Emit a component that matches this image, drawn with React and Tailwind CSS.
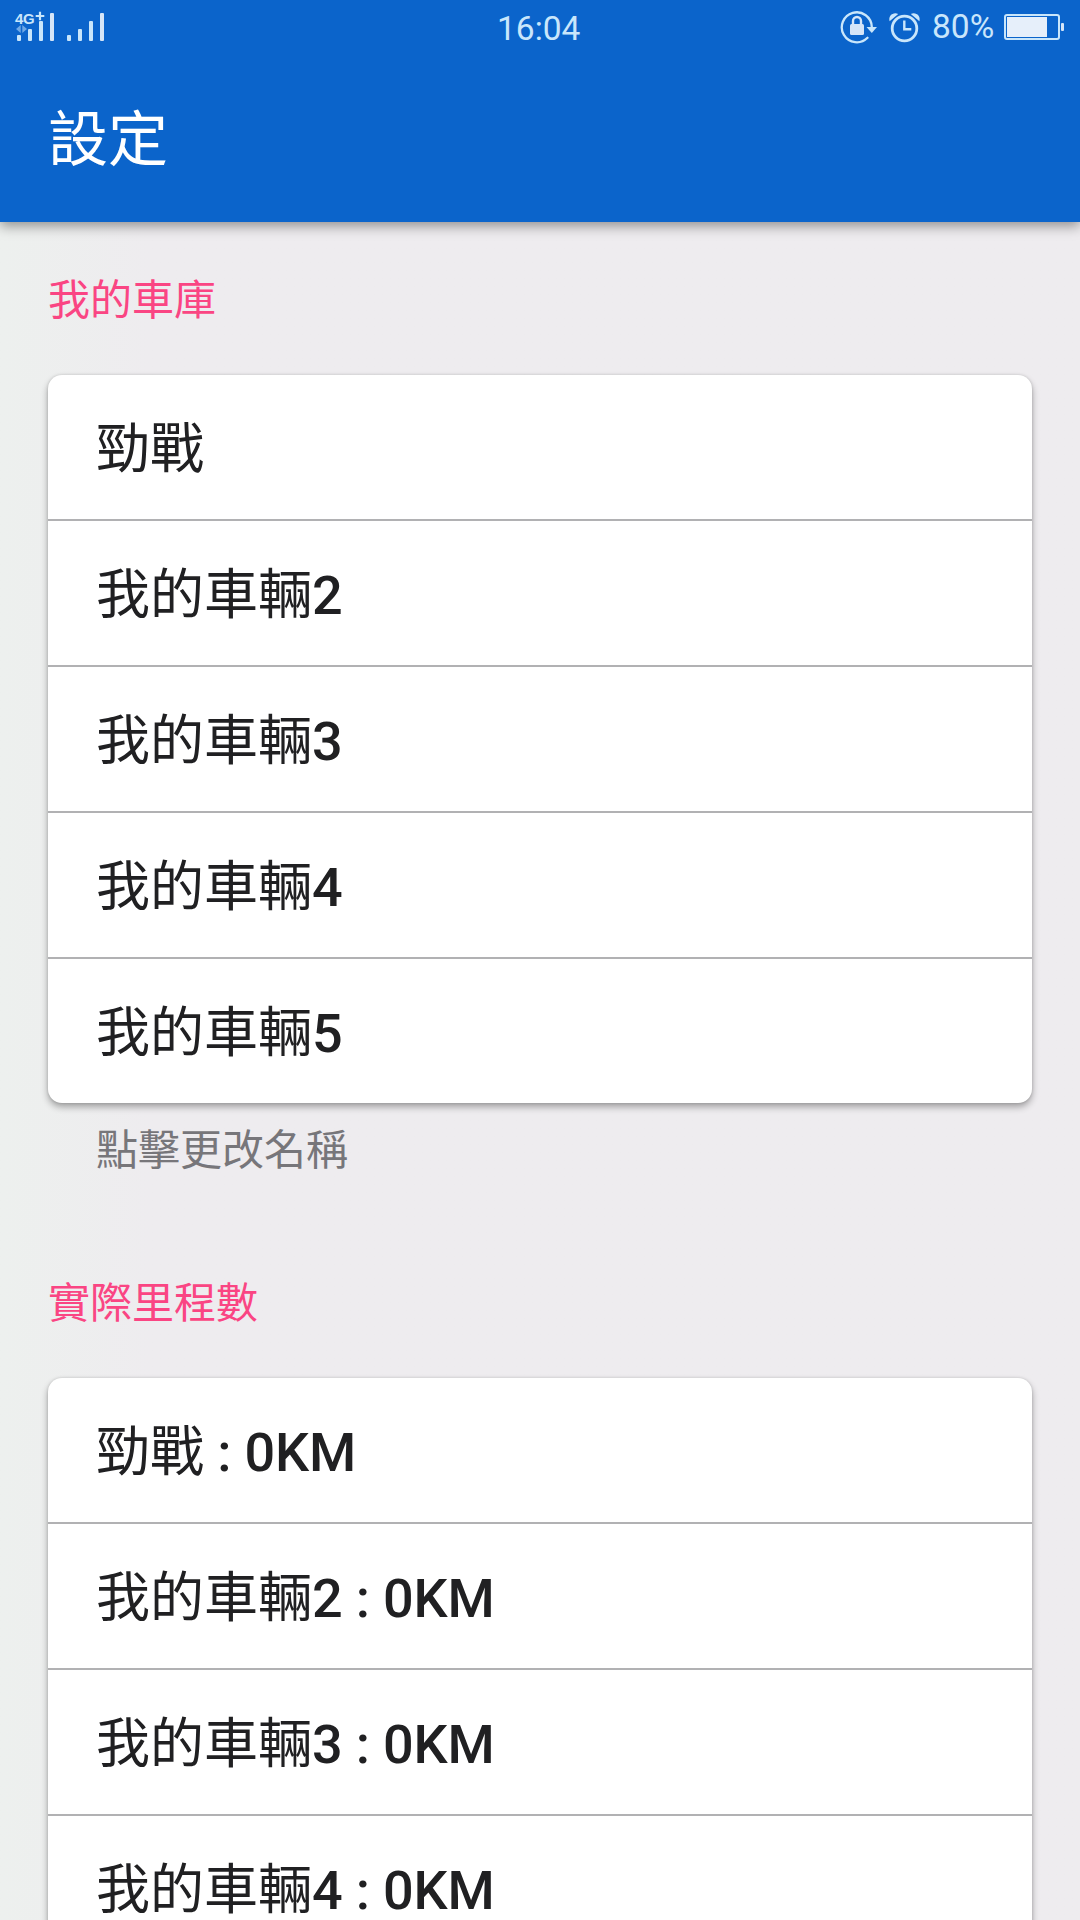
const vozila = ['勁戰', '我的車輛2', '我的車輛3', '我的車輛4', '我的車輛5'];
const kilometraza = vozila.slice(0, 4).map((v) => `${v} : 0KM`);

function Signal() {
  return (
    <div className="flex items-end gap-[7px]">
      <span className="w-1 h-[6px] rounded-[1px] bg-[#c9e6fb]" />
      <span className="w-1 h-3 rounded-[1px] bg-[#c9e6fb]" />
      <span className="w-1 h-5 rounded-[1px] bg-[#c9e6fb]" />
      <span className="w-1 h-7 rounded-[1px] bg-[#d5e5f8]" />
    </div>
  );
}

function StatusBar() {
  return (
    <div className="relative h-[60px] flex items-center justify-between pl-[17px] pr-4 text-[#c9e6fb]">
      <div className="relative flex gap-[13px] -mt-[6px]">
        <Signal />
        <Signal />
        <span className="absolute left-[-2px] -top-px font-['Liberation_Sans'] font-bold text-[15px] leading-[14px] tracking-[-0.3px]">
          4G
        </span>
        <svg className="absolute left-[18px] -top-[2px]" width="10" height="10" viewBox="0 0 10 10">
          <path d="M.7 5h8.6M5 .7v8.6" stroke="currentColor" strokeWidth="2.2" />
        </svg>
        <svg className="absolute left-[-1px] top-[12px]" width="11" height="8" viewBox="0 0 11 8">
          <path d="M0 4 4.7 0v8zM11 4 6.3 0v8z" fill="#6fa9e6" />
        </svg>
      </div>

      <span className="absolute left-[497px] top-[9px] text-[33.5px] leading-[40px]">16:04</span>

      <div className="flex items-center -mt-[6px]">
        {/* rotation lock */}
        <svg width="38" height="36" viewBox="840 9 38 36" fill="none">
          <path
            d="M867.5 37.8A15 15 0 1 1 871.8 27"
            stroke="currentColor"
            strokeWidth="2.3"
            strokeLinecap="round"
          />
          <path d="M866.5 27h10.5l-5.2 6z" fill="currentColor" />
          <rect x="850" y="24" width="14" height="11" rx="1.5" fill="#d5e5f8" />
          <path d="M853 25v-4a4 4 0 0 1 8 0v4" stroke="#d5e5f8" strokeWidth="2.4" />
        </svg>
        {/* alarm */}
        <svg className="ml-[10px]" width="34" height="36" viewBox="888 9 34 36" fill="none">
          <circle cx="904.5" cy="28.5" r="12.3" stroke="currentColor" strokeWidth="2.8" />
          <path d="M904.3 20.5v8.8h7" stroke="currentColor" strokeWidth="2.4" />
          <path
            d="M889.6 21.3c-1.6-5.4 3.6-9.6 8.6-7.3zM919.4 21.3c1.6-5.4-3.6-9.6-8.6-7.3z"
            fill="currentColor"
          />
        </svg>
        <span className="ml-[10px] text-[33.5px] leading-[36px] w-[62px]">80%</span>
        {/* battery */}
        <svg className="ml-[10px]" width="60" height="36" viewBox="1004 9 60 36" fill="none">
          <rect x="1005" y="15" width="54" height="24" rx="2" stroke="currentColor" strokeWidth="2" />
          <rect x="1007" y="17" width="40" height="20" fill="#e6effa" />
          <rect x="1061" y="23" width="3" height="8" rx="1" fill="#d5e5f8" />
        </svg>
      </div>
    </div>
  );
}

function Stavka({ tekst }) {
  // Chinese part stays regular, digits and units are medium
  const [, naziv, ostatak] = tekst.match(/^([^\d :]+)(.*)$/);

  return (
    <li className="box-content h-36 pl-12 text-[54px] leading-[149px] whitespace-pre text-[#202022]">
      {naziv}
      <span className="font-medium tracking-[-0.2px]">{ostatak}</span>
    </li>
  );
}

function Sekcija({ naslov, stavke }) {
  return (
    <section className="px-12">
      <h2 className="text-[42px] leading-[60px] font-normal text-[#fa4583]">{naslov}</h2>
      <ul className="mt-11 rounded-[14px] bg-white divide-y-2 divide-[#b1b1b3] shadow-[0_4px_7px_rgba(0,0,0,0.32),0_0_3px_rgba(0,0,0,0.14)]">
        {stavke.map((stavka) => (
          <Stavka key={stavka} tekst={stavka} />
        ))}
      </ul>
    </section>
  );
}

function App() {
  return (
    <div
      lang="zh-TW"
      className="w-[1080px] h-[1920px] overflow-hidden bg-[#eeecef] font-[Roboto,'Noto_Sans_CJK_TC',sans-serif]"
    >
      <header className="relative h-[222px] bg-[#0b64cb] shadow-[0_4px_12px_rgba(0,0,0,0.4)]">
        <StatusBar />
        <h1 className="pl-12 pt-[37px] text-[60px] leading-[88px] font-normal text-white">設定</h1>
      </header>

      <main className="pt-[49px] bg-linear-to-r from-[#edf0ee] to-[#eeecef] to-[150px]">
        <Sekcija naslov="我的車庫" stavke={vozila} />
        <p className="mt-[18px] pl-24 text-[42px] leading-[60px] text-[#77767a]">點擊更改名稱</p>
        <div className="mt-[93px]">
          <Sekcija naslov="實際里程數" stavke={kilometraza} />
        </div>
      </main>
    </div>
  );
}

export default App;
